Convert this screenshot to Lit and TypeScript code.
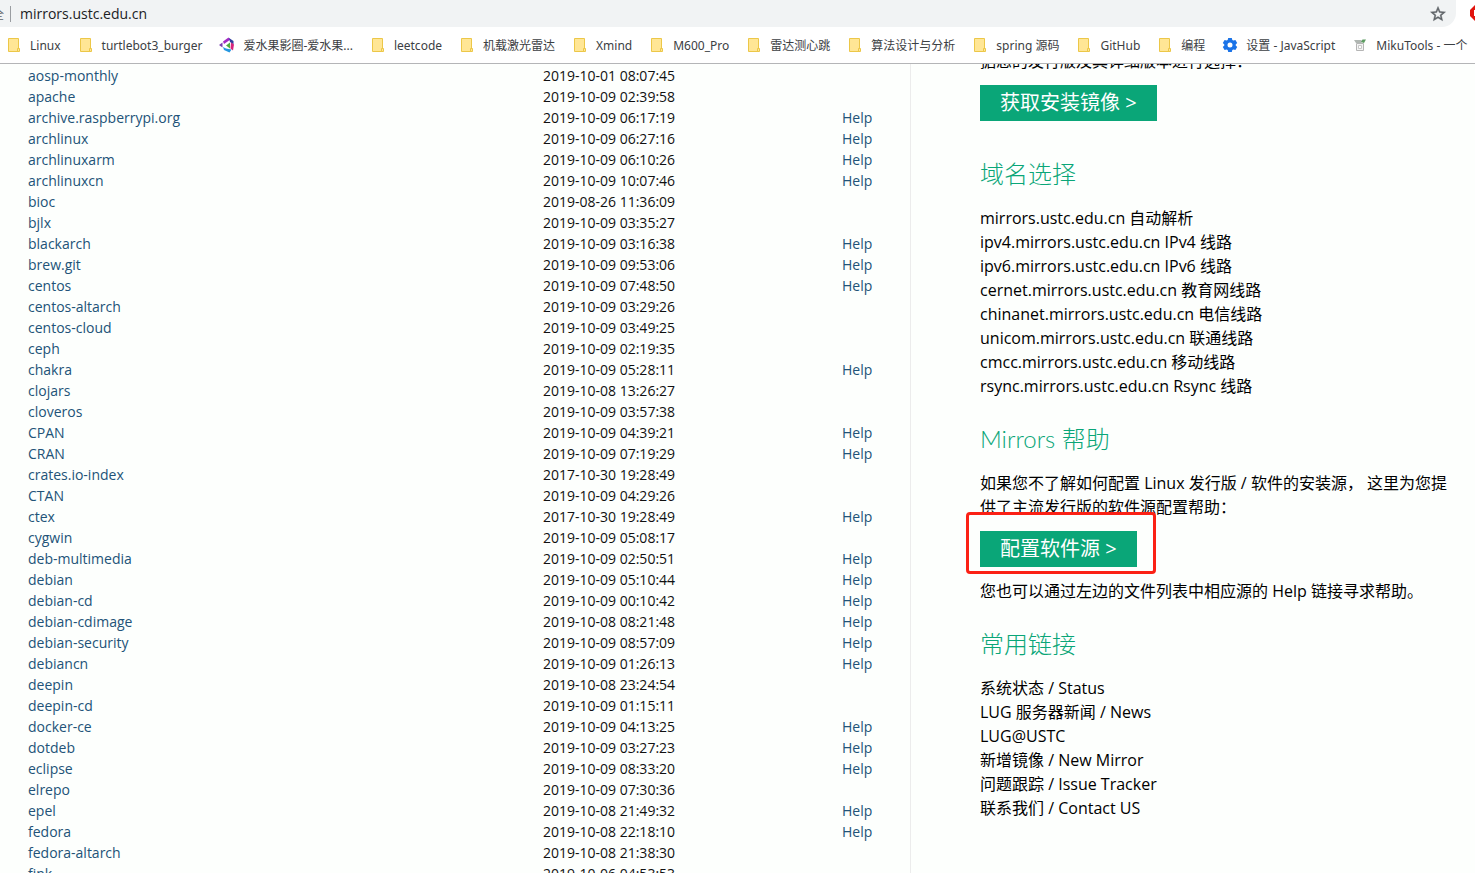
import { LitElement, html, css, svg } from "lit";
import { customElement } from "lit/decorators.js";

type Mirror = [name: string, date: string, help?: boolean];

const MIRRORS: Mirror[] = [
  ["aosp-monthly", "2019-10-01 08:07:45"],
  ["apache", "2019-10-09 02:39:58"],
  ["archive.raspberrypi.org", "2019-10-09 06:17:19", true],
  ["archlinux", "2019-10-09 06:27:16", true],
  ["archlinuxarm", "2019-10-09 06:10:26", true],
  ["archlinuxcn", "2019-10-09 10:07:46", true],
  ["bioc", "2019-08-26 11:36:09"],
  ["bjlx", "2019-10-09 03:35:27"],
  ["blackarch", "2019-10-09 03:16:38", true],
  ["brew.git", "2019-10-09 09:53:06", true],
  ["centos", "2019-10-09 07:48:50", true],
  ["centos-altarch", "2019-10-09 03:29:26"],
  ["centos-cloud", "2019-10-09 03:49:25"],
  ["ceph", "2019-10-09 02:19:35"],
  ["chakra", "2019-10-09 05:28:11", true],
  ["clojars", "2019-10-08 13:26:27"],
  ["cloveros", "2019-10-09 03:57:38"],
  ["CPAN", "2019-10-09 04:39:21", true],
  ["CRAN", "2019-10-09 07:19:29", true],
  ["crates.io-index", "2017-10-30 19:28:49"],
  ["CTAN", "2019-10-09 04:29:26"],
  ["ctex", "2017-10-30 19:28:49", true],
  ["cygwin", "2019-10-09 05:08:17"],
  ["deb-multimedia", "2019-10-09 02:50:51", true],
  ["debian", "2019-10-09 05:10:44", true],
  ["debian-cd", "2019-10-09 00:10:42", true],
  ["debian-cdimage", "2019-10-08 08:21:48", true],
  ["debian-security", "2019-10-09 08:57:09", true],
  ["debiancn", "2019-10-09 01:26:13", true],
  ["deepin", "2019-10-08 23:24:54"],
  ["deepin-cd", "2019-10-09 01:15:11"],
  ["docker-ce", "2019-10-09 04:13:25", true],
  ["dotdeb", "2019-10-09 03:27:23", true],
  ["eclipse", "2019-10-09 08:33:20", true],
  ["elrepo", "2019-10-09 07:30:36"],
  ["epel", "2019-10-08 21:49:32", true],
  ["fedora", "2019-10-08 22:18:10", true],
  ["fedora-altarch", "2019-10-08 21:38:30"],
  ["fink", "2019-10-06 04:53:53"],
];

const DOMAINS: [string, string][] = [
  ["mirrors.ustc.edu.cn", "自动解析"],
  ["ipv4.mirrors.ustc.edu.cn", "IPv4 线路"],
  ["ipv6.mirrors.ustc.edu.cn", "IPv6 线路"],
  ["cernet.mirrors.ustc.edu.cn", "教育网线路"],
  ["chinanet.mirrors.ustc.edu.cn", "电信线路"],
  ["unicom.mirrors.ustc.edu.cn", "联通线路"],
  ["cmcc.mirrors.ustc.edu.cn", "移动线路"],
  ["rsync.mirrors.ustc.edu.cn", "Rsync 线路"],
];

const LINKS = [
  "系统状态 / Status",
  "LUG 服务器新闻 / News",
  "LUG@USTC",
  "新增镜像 / New Mirror",
  "问题跟踪 / Issue Tracker",
  "联系我们 / Contact US",
];

const ICONS = {
  folder: svg`
    <path d="M2.5 1.500h10v13h-10z" fill="#ffe695" stroke="#ecc748"/>
    <path d="M11.500 11.500h2v3h-2z" fill="#ffe695" stroke="#ecc748"/>`,
  fruit: svg`
    <path d="M0 8l3.500-2.500v5z" fill="#7a3fb0"/>
    <path d="M4 4.500L9.500.5l2 2-6.500 4.500z" fill="#a32cc4"/>
    <path d="M10 1l4.500 3v3.500L11 5z" fill="#2f3fa0"/>
    <path d="M12 5.500l3 2-1 6-2.500-2z" fill="#d6247c"/>
    <path d="M7 8.500L11 5.500v6z" fill="#4fae3a"/>
    <path d="M4 10l3 1.500 5.500 1-2 3-5.500-2.500z" fill="#2497e0"/>`,
  gear: svg`
    <path fill="#1a73e8" fill-rule="evenodd" d="M6.200 1h3.600l.5 2 1.100.6 2-.5 1.800 3-1.500 1.400v1l1.500 1.400-1.800 3-2-.5-1.100.6-.5 2H6.200l-.5-2-1.100-.6-2 .5-1.800-3 1.500-1.400v-1L.8 6.100l1.800-3 2 .5L5.700 3zM8 5.500a2.500 2.500 0 100 5 2.500 2.500 0 000-5z"/>`,
  miku: svg`
    <path d="M4.500 6.500h7v7h-7z" fill="#f4f4f4" stroke="#b5b5b5"/>
    <path d="M6.500 8.500h3v3h-3z" fill="#fff" stroke="#c8c8c8"/>
    <path d="M2 3h7l2 1.500-2 1.500H4z" fill="#b0b6b2"/>
    <path d="M9 5l1.500-2.500H14L12 6z" fill="#5d9c62"/>`,
};

const BOOKMARKS: [keyof typeof ICONS, string][] = [
  ["folder", "Linux"],
  ["folder", "turtlebot3_burger"],
  ["fruit", "爱水果影圈-爱水果..."],
  ["folder", "leetcode"],
  ["folder", "机载激光雷达"],
  ["folder", "Xmind"],
  ["folder", "M600_Pro"],
  ["folder", "雷达测心跳"],
  ["folder", "算法设计与分析"],
  ["folder", "spring 源码"],
  ["folder", "GitHub"],
  ["folder", "编程"],
  ["gear", "设置 - JavaScript"],
  ["miku", "MikuTools - 一个"],
];

@customElement("browser-chrome")
class BrowserChrome extends LitElement {
  static styles = css`
    :host {
      display: block;
      flex: none;
      background: #fff;
      border-bottom: 1px solid #b4b5b7;
      font-family: "Open Sans", "Noto Sans CJK SC", sans-serif;
    }
    .top {
      display: flex;
      justify-content: space-between;
      height: 27px;
      overflow: hidden;
    }
    .address {
      display: flex;
      align-items: center;
      flex: 1;
      min-width: 0;
      margin-right: 14px;
      padding-right: 9px;
      background: #f1f3f4;
      border-radius: 0 0 14px 0;
    }
    .safe {
      display: flex;
      justify-content: flex-end;
      width: 4px;
      overflow: hidden;
      font-size: 12px;
      color: #5f6368;
    }
    .divider {
      width: 1px;
      height: 16px;
      margin: 0 9px 0 6px;
      background: #9a9da1;
    }
    .url {
      flex: 1;
      min-width: 0;
      height: 24px;
      padding: 0;
      border: 0;
      outline: 0;
      background: none;
      font: 14px/24px "Open Sans", sans-serif;
      color: #202124;
    }
    .star {
      display: flex;
      padding: 0;
      border: 0;
      background: none;
    }
    .ext {
      width: 5px;
      overflow: hidden;
    }
    .ext svg {
      display: block;
      margin-top: 5px;
    }
    .bookmarks {
      display: flex;
      align-items: center;
      gap: 17px;
      height: 36px;
      padding-left: 6px;
      overflow: hidden;
    }
    .bookmark {
      display: flex;
      align-items: center;
      flex: none;
      gap: 8px;
      font-family: "Noto Sans", "Noto Sans CJK SC", sans-serif;
      font-size: 12px;
      line-height: 18px;
      color: #3c4043;
      text-decoration: none;
      white-space: nowrap;
    }
    .label {
      padding-top: 2px;
    }
  `;

  render() {
    return html`
      <div class="top">
        <div class="address">
          <span class="safe">全</span>
          <span class="divider"></span>
          <input class="url" aria-label="地址" value="mirrors.ustc.edu.cn" />
          <button class="star" aria-label="收藏">
            <svg width="18" height="18" viewBox="0 0 24 24" fill="#5f6368" stroke="#5f6368" stroke-width=".6">
              <path d="M22 9.240l-7.190-.620L12 2 9.190 8.630 2 9.240l5.460 4.730L5.820 21 12 17.270 18.180 21l-1.630-7.030L22 9.240zM12 15.400l-3.760 2.270 1-4.280-3.320-2.880 4.380-.380L12 6.100l1.710 4.040 4.380.380-3.320 2.880 1 4.280L12 15.400z"/>
            </svg>
          </button>
        </div>
        <div class="ext">
          <svg width="16" height="16" viewBox="0 0 16 16">
            <path d="M5 0h6l5 5v6l-5 5H5l-5-5V5z" fill="#e1140e"/>
            <path d="M4.500 5v6" stroke="#fff" stroke-width="1"/>
          </svg>
        </div>
      </div>
      <nav class="bookmarks">
        ${BOOKMARKS.map(
          ([icon, label]) => html`<a class="bookmark" href="#">
            <svg width="16" height="16" viewBox="0 0 16 16" fill="none">${ICONS[icon]}</svg>
            <span class="label">${label}</span></a>`
        )}
      </nav>
    `;
  }
}

@customElement("mirror-table")
class MirrorTable extends LitElement {
  static styles = css`
    :host {
      display: block;
      padding: 1px 0 0 28px;
      border-right: 1px solid #ececec;
    }
    .list {
      width: 100%;
      table-layout: fixed;
      border-collapse: collapse;
      font-size: 14px;
      line-height: 21px;
    }
    .name,
    .date,
    .help {
      padding: 0;
      text-align: left;
      font-weight: 400;
      white-space: nowrap;
    }
    .date {
      width: 299px;
      color: #111;
    }
    .help {
      width: 68px;
    }
    .link {
      color: #225378;
      text-decoration: none;
    }
  `;

  render() {
    return html`
      <table class="list">
        <tbody>
          ${MIRRORS.map(
            ([name, date, help]) => html`<tr>
              <th class="name" scope="row"><a class="link" href="#">${name}</a></th>
              <td class="date">${date}</td>
              <td class="help">${help ? html`<a class="link" href="#">Help</a>` : ""}</td>
            </tr>`
          )}
        </tbody>
      </table>
    `;
  }
}

@customElement("mirror-sidebar")
class MirrorSidebar extends LitElement {
  static styles = css`
    :host {
      display: block;
      margin-top: -15px;
      padding: 0 16px 0 69px;
      font-size: 16px;
      line-height: 24px;
      color: #000;
    }
    .text {
      margin: 0;
      font-weight: 400;
    }
    .title {
      margin: 23px 0 14px;
      font-family: Lato, "Noto Sans CJK SC", sans-serif;
      font-size: 24px;
      line-height: 36px;
      font-weight: 300;
      color: #0aa678;
    }
    .items {
      margin: 0;
      padding: 0;
      list-style: none;
    }
    .items a {
      color: inherit;
      text-decoration: none;
    }
    .action {
      display: flex;
      width: fit-content;
      position: relative;
      padding: 12px 0;
    }
    .button {
      padding: 6px 20px;
      border: 0;
      background: #0aa678;
      color: #fff;
      font: inherit;
      font-size: 20px;
      line-height: 24px;
    }
    .marker {
      position: absolute;
      inset: -7px -19px 5px -14px;
      border: 3px solid #fb2115;
      border-radius: 4px;
      pointer-events: none;
    }
  `;

  render() {
    return html`
      <p class="text">据您的发行版及其详细版本进行选择：</p>
      <div class="action"><button class="button">获取安装镜像 &gt;</button></div>
      <h2 class="title">域名选择</h2>
      <ul class="items">
        ${DOMAINS.map(([host, label]) => html`<li>${host} ${label}</li>`)}
      </ul>
      <h2 class="title">Mirrors 帮助</h2>
      <p class="text">如果您不了解如何配置 Linux 发行版 / 软件的安装源， 这里为您提供了主流发行版的软件源配置帮助：</p>
      <div class="action">
        <button class="button">配置软件源 &gt;</button>
        <span class="marker"></span>
      </div>
      <p class="text">您也可以通过左边的文件列表中相应源的 Help 链接寻求帮助。</p>
      <h2 class="title">常用链接</h2>
      <ul class="items">
        ${LINKS.map((label) => html`<li><a href="#">${label}</a></li>`)}
      </ul>
    `;
  }
}

@customElement("app-root")
class AppRoot extends LitElement {
  static styles = css`
    :host {
      display: flex;
      flex-direction: column;
      height: 100vh;
      overflow: hidden;
      background: #fdfffd;
      font-family: "Open Sans", "Noto Sans CJK SC", sans-serif;
    }
    .page {
      display: grid;
      grid-template-columns: minmax(0, 1fr) 564px;
      align-items: start;
      flex: 1;
      min-height: 0;
      overflow: hidden;
    }
  `;

  render() {
    return html`
      <browser-chrome></browser-chrome>
      <main class="page">
        <mirror-table></mirror-table>
        <mirror-sidebar></mirror-sidebar>
      </main>
    `;
  }
}
